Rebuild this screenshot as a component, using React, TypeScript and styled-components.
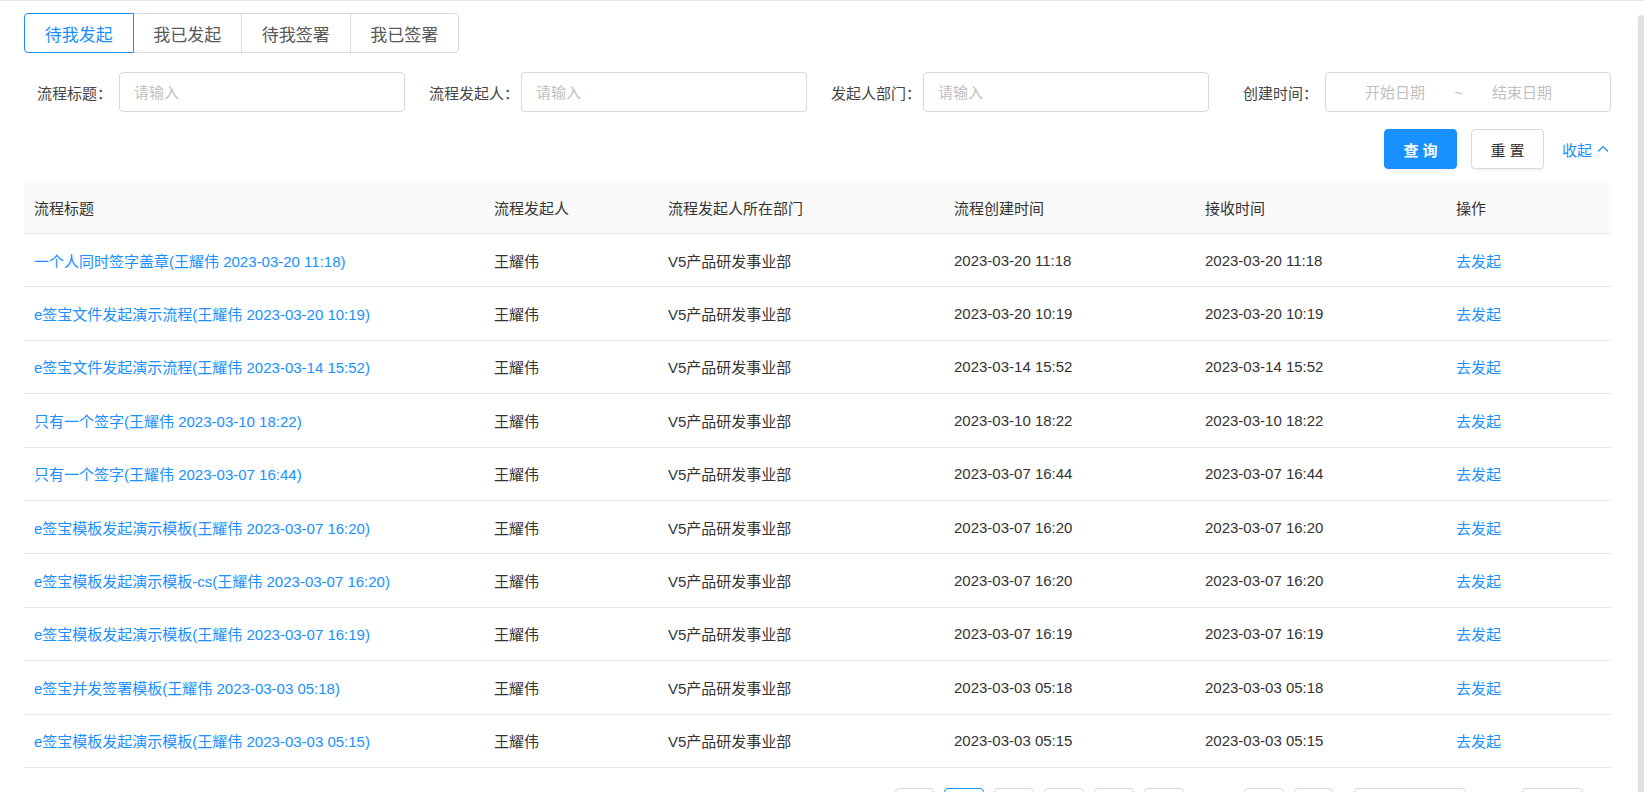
import React from "react";
import styled, { createGlobalStyle } from "styled-components";

const GlobalStyle = createGlobalStyle`
  html, body {
    margin: 0;
    padding: 0;
    overflow: hidden;
    background: #fff;
  }
  body {
    font-family: "Liberation Sans", "Noto Sans CJK SC", sans-serif;
    color: #333;
  }
  * {
    box-sizing: border-box;
  }
`;

const Shell = styled.div`
  display: flex;
  height: 100vh;
  border-top: 1px solid #e8e8e8;
`;

const Main = styled.main`
  flex: 1;
  min-width: 0;
  overflow: hidden;
  padding: 12px 27px 20px 24px;
`;

const ScrollRail = styled.div`
  width: 6px;
  flex: none;
  display: flex;
  padding-top: 14px;
`;

const ScrollThumb = styled.div`
  flex: 1;
  background: #e1e1e1;
  border-radius: 3px 3px 0 0;
`;

const Tabs = styled.div`
  display: flex;
`;

const Tab = styled.div<{ $active?: boolean }>`
  width: 109.5px;
  height: 40px;
  display: flex;
  align-items: center;
  justify-content: center;
  font-size: 17px;
  color: ${(p) => (p.$active ? "#1890ff" : "#595959")};
  border: 1px solid ${(p) => (p.$active ? "#1890ff" : "#d9d9d9")};
  position: relative;
  z-index: ${(p) => (p.$active ? 1 : 0)};
  background: #fff;
  cursor: pointer;

  & + & {
    margin-left: -1px;
  }
  &:first-child {
    border-radius: 4px 0 0 4px;
  }
  &:last-child {
    border-radius: 0 4px 4px 0;
  }
`;

const Filters = styled.div`
  display: grid;
  grid-template-columns: repeat(4, 378px);
  column-gap: 24px;
  padding-left: 3px;
  margin-top: 19px;
`;

const Field = styled.div`
  display: flex;
  align-items: center;
  min-width: 0;
`;

const Label = styled.label`
  width: 92px;
  flex: none;
  text-align: right;
  padding-right: 7px;
  font-size: 15px;
  color: #444;
  white-space: nowrap;
`;

const Input = styled.input`
  flex: 1;
  min-width: 0;
  height: 40px;
  border: 1px solid #d9d9d9;
  border-radius: 4px;
  padding: 0 14px;
  font-size: 15px;
  font-family: inherit;
  color: #333;
  outline: none;

  &::placeholder {
    color: #bfbfbf;
  }
`;

const RangeBox = styled.div`
  flex: 1;
  min-width: 0;
  height: 40px;
  border: 1px solid #d9d9d9;
  border-radius: 4px;
  display: flex;
  align-items: center;
  padding: 0 37px 0 18px;
`;

const RangeInput = styled.input`
  flex: 1;
  width: 0;
  min-width: 0;
  border: none;
  outline: none;
  text-align: center;
  font-size: 15px;
  font-family: inherit;
  background: transparent;

  &::placeholder {
    color: #bfbfbf;
  }
`;

const RangeSep = styled.span`
  color: #bfbfbf;
  font-size: 15px;
  padding: 0 8px;
`;

const Actions = styled.div`
  display: flex;
  justify-content: flex-end;
  align-items: center;
  margin-top: 17px;
  padding-right: 2px;
`;

const Button = styled.button<{ $primary?: boolean }>`
  width: 73px;
  height: 40px;
  border-radius: 4px;
  font-family: inherit;
  font-size: 15px;
  font-weight: ${(p) => (p.$primary ? 700 : 400)};
  letter-spacing: 4px;
  text-indent: 4px;
  cursor: pointer;
  color: ${(p) => (p.$primary ? "#fff" : "#333")};
  background: ${(p) => (p.$primary ? "#1890ff" : "#fff")};
  border: 1px solid ${(p) => (p.$primary ? "#1890ff" : "#d9d9d9")};
  box-shadow: 0 2px 0 rgba(0, 0, 0, 0.03);

  & + & {
    margin-left: 14px;
  }
`;

const Collapse = styled.a`
  display: flex;
  align-items: center;
  gap: 5px;
  margin-left: 18px;
  font-size: 15px;
  color: #1890ff;
  cursor: pointer;
`;

const Table = styled.div`
  margin-top: 13px;
`;

const Row = styled.div<{ $head?: boolean }>`
  display: grid;
  grid-template-columns: 460px 174px 286px 251px 251px 165px;
  align-items: center;
  height: ${(p) => (p.$head ? "52px" : "53.4px")};
  border-bottom: 1px solid #e8e8e8;
  background: ${(p) => (p.$head ? "#fafafa" : "#fff")};
  border-radius: ${(p) => (p.$head ? "6px 6px 0 0" : "0")};
`;

const Cell = styled.div<{ $link?: boolean }>`
  padding-left: 10px;
  font-size: 15px;
  color: ${(p) => (p.$link ? "#1890ff" : "#333")};
  white-space: nowrap;
  overflow: hidden;
  cursor: ${(p) => (p.$link ? "pointer" : "default")};
`;

const Pager = styled.div`
  display: flex;
  justify-content: flex-end;
  align-items: center;
  margin-top: 20px;
  gap: 10px;
  font-size: 15px;
  color: #333;
`;

const PageItem = styled.div<{ $active?: boolean; $plain?: boolean; $arrow?: boolean }>`
  min-width: ${(p) => (p.$arrow ? "39px" : "40px")};
  height: 34px;
  display: flex;
  align-items: center;
  justify-content: center;
  border-radius: 4px;
  border: 1px solid
    ${(p) => (p.$plain ? "transparent" : p.$active ? "#1890ff" : "#d9d9d9")};
  color: ${(p) => (p.$active ? "#1890ff" : p.$plain ? "#bfbfbf" : "#333")};
  letter-spacing: ${(p) => (p.$plain ? "2px" : "0")};
`;

const SizeSelect = styled.div`
  width: 112px;
  height: 34px;
  margin-left: 11px;
  border: 1px solid #d9d9d9;
  border-radius: 4px;
  display: flex;
  align-items: center;
  justify-content: space-between;
  padding: 0 11px;
`;

const Jumper = styled.div`
  display: flex;
  align-items: center;
  margin-left: 8px;
  padding-right: 5px;
`;

const JumpInput = styled.input`
  width: 61px;
  height: 34px;
  margin: 0 8px;
  border: 1px solid #d9d9d9;
  border-radius: 4px;
  outline: none;
`;

const Chevron = ({ up = false }: { up?: boolean }) => (
  <svg width="12" height="12" viewBox="0 0 12 12" fill="none">
    <polyline
      points={up ? "1,8.5 6,3.5 11,8.5" : "1,3.5 6,8.5 11,3.5"}
      stroke="currentColor"
      strokeWidth="1.2"
    />
  </svg>
);

const rows = [
  ["一个人同时签字盖章", "2023-03-20 11:18"],
  ["e签宝文件发起演示流程", "2023-03-20 10:19"],
  ["e签宝文件发起演示流程", "2023-03-14 15:52"],
  ["只有一个签字", "2023-03-10 18:22"],
  ["只有一个签字", "2023-03-07 16:44"],
  ["e签宝模板发起演示模板", "2023-03-07 16:20"],
  ["e签宝模板发起演示模板-cs", "2023-03-07 16:20"],
  ["e签宝模板发起演示模板", "2023-03-07 16:19"],
  ["e签宝并发签署模板", "2023-03-03 05:18"],
  ["e签宝模板发起演示模板", "2023-03-03 05:15"],
];

const tabs = ["待我发起", "我已发起", "待我签署", "我已签署"];
const fields = ["流程标题", "流程发起人", "发起人部门"];
const headers = ["流程标题", "流程发起人", "流程发起人所在部门", "流程创建时间", "接收时间", "操作"];

export default function App() {
  return (
    <>
      <GlobalStyle />
      <Shell>
        <Main>
          <Tabs>
            {tabs.map((t, i) => (
              <Tab key={t} $active={i === 0}>
                {t}
              </Tab>
            ))}
          </Tabs>

          <Filters>
            {fields.map((f) => (
              <Field key={f}>
                <Label>{f}：</Label>
                <Input placeholder="请输入" />
              </Field>
            ))}
            <Field>
              <Label>创建时间：</Label>
              <RangeBox>
                <RangeInput placeholder="开始日期" />
                <RangeSep>~</RangeSep>
                <RangeInput placeholder="结束日期" />
              </RangeBox>
            </Field>
          </Filters>

          <Actions>
            <Button $primary>查询</Button>
            <Button>重置</Button>
            <Collapse>
              收起
              <Chevron up />
            </Collapse>
          </Actions>

          <Table>
            <Row $head>
              {headers.map((h) => (
                <Cell key={h}>{h}</Cell>
              ))}
            </Row>
            {rows.map(([title, time], i) => (
              <Row key={i}>
                <Cell $link>
                  {title}(王耀伟 {time})
                </Cell>
                <Cell>王耀伟</Cell>
                <Cell>V5产品研发事业部</Cell>
                <Cell>{time}</Cell>
                <Cell>{time}</Cell>
                <Cell $link>去发起</Cell>
              </Row>
            ))}
          </Table>

          <Pager>
            <PageItem $arrow>‹</PageItem>
            <PageItem $active>1</PageItem>
            <PageItem>2</PageItem>
            <PageItem>3</PageItem>
            <PageItem>4</PageItem>
            <PageItem>5</PageItem>
            <PageItem $plain>•••</PageItem>
            <PageItem>12</PageItem>
            <PageItem $arrow>›</PageItem>
            <SizeSelect>
              10 条/页
              <Chevron />
            </SizeSelect>
            <Jumper>
              跳至
              <JumpInput />
              页
            </Jumper>
          </Pager>
        </Main>
        <ScrollRail>
          <ScrollThumb />
        </ScrollRail>
      </Shell>
    </>
  );
}
